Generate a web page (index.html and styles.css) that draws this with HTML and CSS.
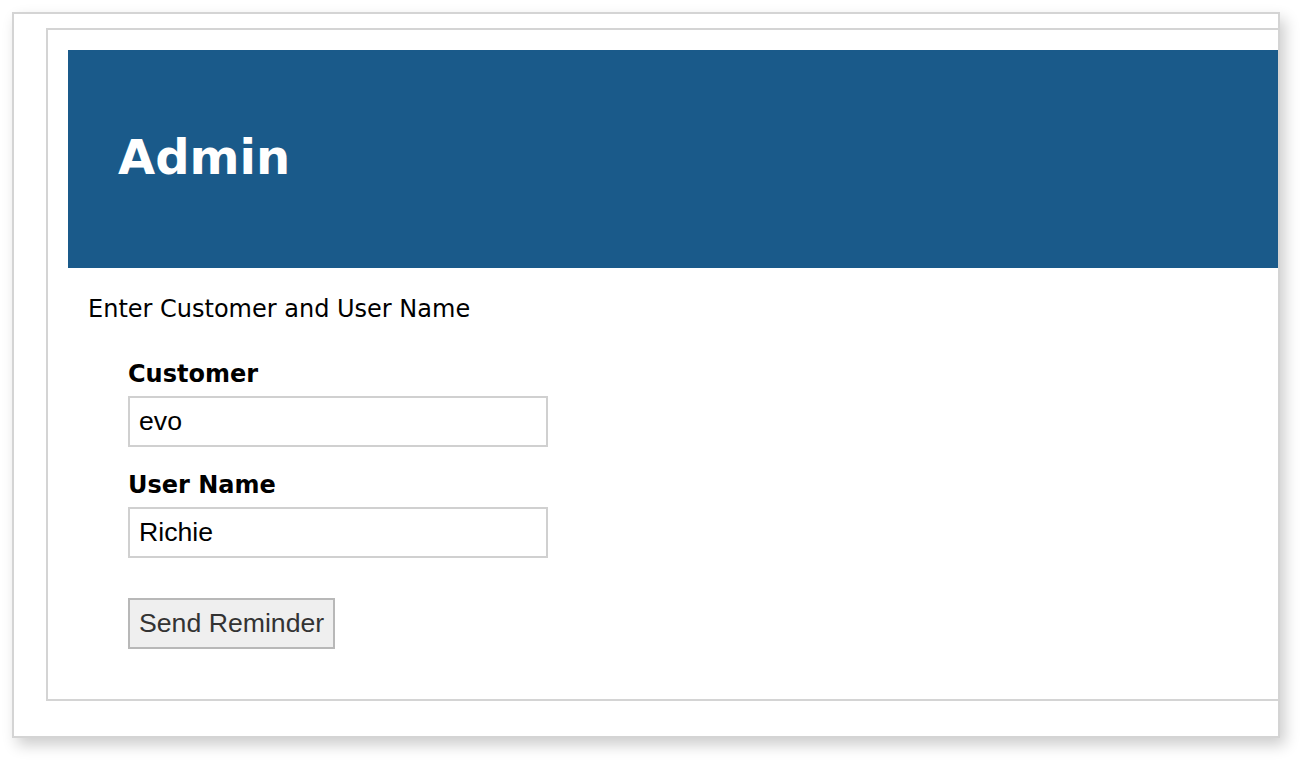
FILE: index.html
```html
<!doctype html>
<html lang="en">
  <head>
    <meta charset="UTF-8" />
    <title>Admin</title>
    <link rel="stylesheet" href="styles.css">
  </head>
  <body>
    <div class="frame">
      <div class="panel">
        <div class="banner">
          <h1>Admin</h1>
        </div>
        <div class="content">
          <p class="intro">Enter Customer and User Name</p>

          <form id="reminder-form" class="reminder">
            <div class="field">
              <label for="customer">Customer</label>
              <input type="text" id="customer" name="customer" value="evo" />
            </div>
            <div class="field">
              <label for="username">User Name</label>
              <input type="text" id="username" name="username" value="Richie" />
            </div>
            <button type="submit">Send Reminder</button>
          </form>
        </div>
      </div>
    </div>
  </body>
</html>
```

FILE: styles.css
```css
body {
  font-family: Verdana, "DejaVu Sans", sans-serif;
  background-color: #fff;
  color: #000;
  margin: 0;
  padding: 12px 0 28px 12px;
}
.frame {
  width: 1232px;
  padding: 14px 0 35px 32px;
  border: 2px solid #d4d4d4;
  background-color: #fff;
  overflow: hidden;
  box-shadow: 5px 7px 14px rgba(0, 0, 0, 0.2);
}
.panel {
  width: 1300px;
  padding: 20px;
  border: 2px solid #d4d4d4;
}
.banner {
  background-color: #1a5a8a;
  padding: 78px 50px 82px;
}
.banner h1 {
  margin: 0;
  color: #fff;
  font-size: 48px;
  line-height: 58px;
  font-weight: bold;
}
.content {
  padding: 0 20px 30px;
}
.intro {
  margin: 23px 0 0;
  font-size: 24px;
  line-height: 36px;
}
.reminder {
  margin: 32px 0 0 40px;
}
.field {
  margin-bottom: 23px;
}
.field:last-of-type {
  margin-bottom: 40px;
}
label {
  display: block;
  font-size: 24px;
  line-height: 30px;
  font-weight: bold;
  margin-bottom: 7px;
}
input[type='text'] {
  display: block;
  box-sizing: border-box;
  width: 420px;
  height: 51px;
  margin: 0;
  padding: 0 9px;
  border: 2px solid #d0d0d0;
  border-radius: 0;
  font-family: Arial, "Liberation Sans", sans-serif;
  font-size: 26.67px;
  color: #000;
  outline: none;
}
button {
  display: block;
  box-sizing: border-box;
  height: 51px;
  margin: 0;
  padding: 0 9px;
  background-color: #efefef;
  border: 2px solid #b8b8b8;
  border-radius: 0;
  font-family: Arial, "Liberation Sans", sans-serif;
  font-size: 26.67px;
  color: #333;
  cursor: pointer;
}
button:hover {
  background-color: #e5e5e5;
}
```
